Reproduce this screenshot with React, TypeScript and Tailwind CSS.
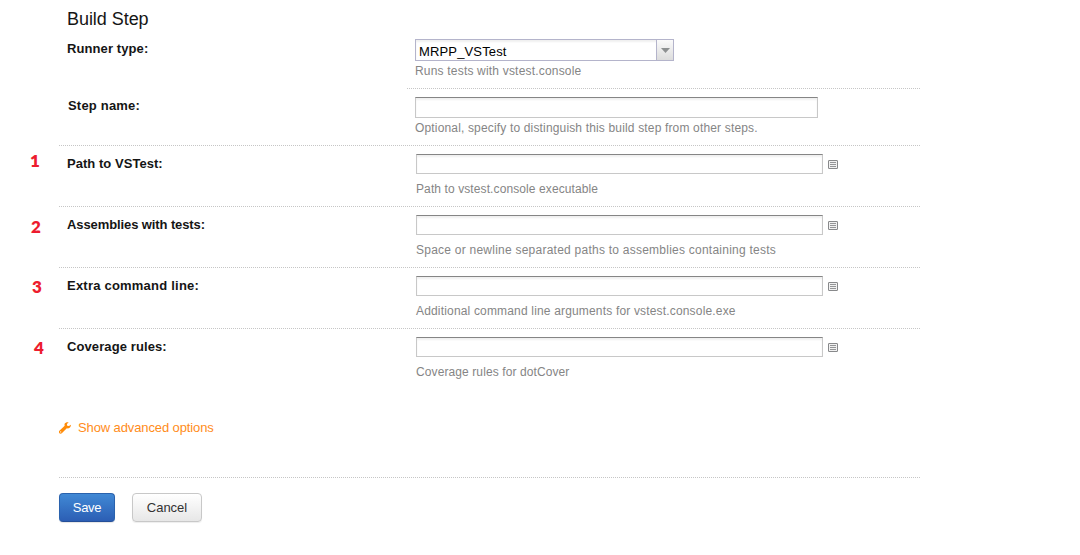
import React from 'react';

const line =
  'bg-[repeating-linear-gradient(90deg,#c6c6c6_0px,#c6c6c6_1px,transparent_1px,transparent_2px)] h-px';
const input =
  'block border border-[#c8c8c8] border-t-[#858585] bg-white shadow-[inset_0_2px_2px_#f0f0f0] outline-none';

const options = [
  { num: '1', pad: 'pl-[30px] pt-[5px]', label: 'Path to VSTest:', track: 'tracking-[0.04px]', hint: 'Path to vstest.console executable', hintTrack: 'tracking-[0.1px]' },
  { num: '2', pad: 'pl-[31px] pt-[10px]', label: 'Assemblies with tests:', track: 'tracking-[-0.1px]', hint: 'Space or newline separated paths to assemblies containing tests', hintTrack: 'tracking-[0.24px]' },
  { num: '3', pad: 'pl-[32px] pt-[9px]', label: 'Extra command line:', track: 'tracking-[0.22px]', hint: 'Additional command line arguments for vstest.console.exe', hintTrack: 'tracking-[0.17px]' },
  { num: '4', pad: 'pl-[34px] pt-[9px]', label: 'Coverage rules:', track: 'tracking-[0.1px]', hint: 'Coverage rules for dotCover', hintTrack: 'tracking-[0.1px]' },
];

function ListIcon() {
  return (
    <svg className="mt-[6px] ml-[5px] h-[9px] w-[10px]" viewBox="0 0 10 9" shapeRendering="crispEdges">
      <rect width="10" height="9" fill="#b5b5b5" />
      <path d="M1 0h8v1H1zM1 8h8v1H1zM0 1h1v7H0zM9 1h1v7H9z" fill="#88898b" />
      <path d="M1 1h8v7H1z" fill="#f1f1f1" />
      <path d="M2 2h6v1H2zM2 4h6v1H2zM2 6h6v1H2z" fill="#949597" />
    </svg>
  );
}

function Wrench() {
  return (
    <svg className="h-3 w-3" viewBox="0 0 12 12">
      <path
        d="M11.900 2.700 10 4.100 8.200 3.700 7.900 2.100 9.600.4C8.200-.2 6.500.300 5.800 1.600c-.4.8-.4 1.500-.1 2.200L.4 8.700c-.7.7-.6 1.900 0 2.500.6.600 1.700.600 2.400 0L7.800 6.300c.9.300 2 .1 2.800-.6.9-.800 1.400-1.900 1.300-3ZM1.700 10.500a.6.6 0 1 1 0-1.200.6.6 0 0 1 0 1.200Z"
        fill="#ff8c0a"
        fillRule="evenodd"
      />
    </svg>
  );
}

export default function App() {
  return (
    <main className="h-[555px] w-[1080px] overflow-hidden bg-white font-['Liberation_Sans',Arial,sans-serif] text-[13px] text-[#151515]">
      <h1 className="h-9 pt-[7px] pl-[67px] text-[18px] leading-6">
        <span className="tracking-[-0.05px]">Build Step</span>
      </h1>
      <section className="flex h-[53px] w-[920px]">
        <div className="w-[407px] pt-[5px] pl-[67px] leading-4 font-bold">
          <span className="tracking-[0.1px]">Runner type:</span>
        </div>
        <div className="flex flex-1 flex-col">
          <div className="flex-1 pt-[3px] pl-2">
            <div className="flex h-[22px] w-[259px] border border-[#b4b4cb] shadow-[inset_0_2px_2px_#f0f0f0]">
              <span className="flex-1 pt-[4px] pl-[3px] leading-4 text-black">
                <span className="tracking-[0.15px]">MRPP_VSTest</span>
              </span>
              <button className="flex w-[17px] items-center justify-center border-l border-[#b4b4cb] bg-linear-to-b from-[#fafafa] to-[#dcdcdc]">
                <svg className="h-[5px] w-[9px]" viewBox="0 0 9 5">
                  <path d="M0 0h9L4.500 5Z" fill="#8d9091" />
                </svg>
              </button>
            </div>
            <p className="mt-[2px] text-[12px] leading-4 text-[#858585]">
              <span className="tracking-[0.19px]">Runs tests with vstest.console</span>
            </p>
          </div>
          <div className={line} />
        </div>
      </section>
      <section className="flex h-[57px] w-[920px] flex-col">
        <div className="flex flex-1">
          <label className="w-[415px] pt-[9px] pl-[68px] leading-4 font-bold">
            <span className="tracking-[0.2px]">Step name:</span>
          </label>
          <div className="pt-2">
            <input aria-label="Step name" className={`${input} h-[21px] w-[403px]`} />
            <p className="mt-[2px] text-[12px] leading-4 text-[#858585]">
              <span className="tracking-[0.16px]">Optional, specify to distinguish this build step from other steps.</span>
            </p>
          </div>
        </div>
        <div className={`${line} ml-[59px]`} />
      </section>
      {options.map((o, i) => (
        <section key={o.num} className="flex h-[61px] w-[920px] flex-col">
          <div className="flex flex-1">
            <div className={`${o.pad} w-[67px] font-['Lato',sans-serif] text-[17px] leading-5 font-extrabold text-[#ed1c2e]`}>{o.num}</div>
            <label className="w-[349px] pt-[10px] leading-4 font-bold">
              <span className={o.track}>{o.label}</span>
            </label>
            <div className="pt-2">
              <div className="flex">
                <input aria-label={o.label} className={`${input} h-5 w-[407px]`} />
                <ListIcon />
              </div>
              <p className="mt-[7px] text-[12px] leading-4 text-[#858585]">
                <span className={o.hintTrack}>{o.hint}</span>
              </p>
            </div>
          </div>
          {i < 3 && <div className={`${line} ml-[59px]`} />}
        </section>
      ))}
      <section className="ml-[59px] flex h-[87px] w-[861px] items-start pt-[30px]">
        <a className="flex items-center gap-[7px] leading-4 text-[#ff8c1a]">
          <Wrench />
          <span className="tracking-[-0.11px]">Show advanced options</span>
        </a>
      </section>
      <div className={`${line} ml-[59px] w-[861px]`} />
      <footer className="flex gap-[17px] pt-[15px] pl-[59px]">
        <button className="h-[29px] w-14 rounded-[4px] border border-[#2a62ad] border-b-[#244f98] bg-linear-to-b from-[#4189d5] to-[#2c5eb4] text-white shadow-[0_1px_1px_#e5e5e5]">
          <span className="tracking-[-0.3px]">Save</span>
        </button>
        <button className="h-[29px] w-[70px] rounded-[4px] border border-[#c8c8c8] bg-linear-to-b from-white to-[#e7e7e7] text-[#333] shadow-[0_1px_1px_#eeeeee]">
          Cancel
        </button>
      </footer>
    </main>
  );
}
